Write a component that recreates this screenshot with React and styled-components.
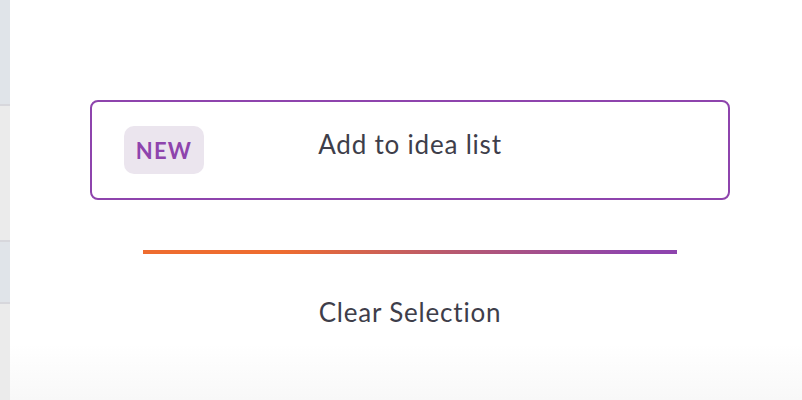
import React from 'react'
import styled, { createGlobalStyle } from 'styled-components'

const GlobalStyle = createGlobalStyle`
  html, body {
    margin: 0;
    padding: 0;
    background: #ffffff;
  }
  body {
    font-family: Lato, "Noto Sans", sans-serif;
  }
`;

const Page = styled.div`
  display: flex;
  width: 802px;
  height: 400px;
  overflow: hidden;
  background: linear-gradient(to bottom, #ffffff 0%, #ffffff 86%, #f8f8f8 100%);
`;

const Sidebar = styled.div`
  width: 10px;
  display: flex;
  flex-direction: column;
  flex-shrink: 0;
`;

const SideRow = styled.div`
  height: ${p => p.h}px;
  background: ${p => (p.tint ? '#e0e4e9' : '#ebebeb')};
  border-bottom: ${p => (p.last ? 'none' : '2px solid #d7d7dc')};
  flex-shrink: 0;
  flex-grow: ${p => (p.last ? 1 : 0)};
`;

const Main = styled.div`
  flex: 1;
  display: flex;
  flex-direction: column;
  align-items: center;
  padding-top: 100px;
  padding-left: 80px;
  padding-right: 72px;
`;

const IdeaButton = styled.button`
  box-sizing: border-box;
  width: 640px;
  height: 100px;
  border: 2px solid #8e44ad;
  border-radius: 8px;
  background: #ffffff;
  display: grid;
  grid-template-columns: 1fr auto 1fr;
  align-items: center;
  padding: 0 32px;
  cursor: pointer;
  font-family: inherit;
`;

const Badge = styled.span`
  justify-self: start;
  width: 80px;
  height: 48px;
  border-radius: 10px;
  background: #ebe5ee;
  color: #8e44ad;
  font-weight: 700;
  font-size: 22px;
  letter-spacing: 1.2px;
  display: flex;
  align-items: center;
  justify-content: center;
`;

const Label = styled.span`
  font-size: 26px;
  letter-spacing: 0.8px;
  color: #3e3e4a;
  margin-top: -12px;
`;

const Divider = styled.div`
  width: 534px;
  height: 4px;
  margin-top: 50px;
  background: linear-gradient(to right, #ee6c2f 0%, #ee6c2f 26%, #b7596f 58%, #8e44ad 92%, #8e44ad 100%);
`;

const ClearLink = styled.a`
  margin-top: 43px;
  font-size: 26px;
  letter-spacing: 0.8px;
  line-height: 30px;
  color: #3e3e4a;
  cursor: pointer;
  text-decoration: none;
`;

export default function App() {
  return (
    <>
      <GlobalStyle />
      <Page>
        <Sidebar>
          <SideRow h={104} tint />
          <SideRow h={134} />
          <SideRow h={60} tint />
          <SideRow h={98} last />
        </Sidebar>
        <Main>
          <IdeaButton type="button">
            <Badge>NEW</Badge>
            <Label>Add to idea list</Label>
            <span />
          </IdeaButton>
          <Divider />
          <ClearLink>Clear Selection</ClearLink>
        </Main>
      </Page>
    </>
  )
}
